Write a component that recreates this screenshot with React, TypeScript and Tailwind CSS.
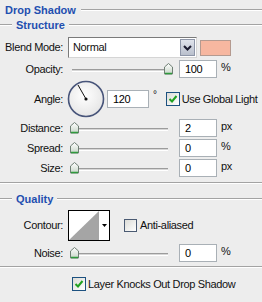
const Etched = ({ className = '' }: { className?: string }) => (
  <div className={`h-[2px] border-t border-[#a3a3a3] border-b border-b-white ${className}`} />
);

const Thumb = () => (
  <svg width="9" height="12" viewBox="0 0 9 12">
    <defs>
      <linearGradient id="tg" x1="0" y1="0" x2="0" y2="1">
        <stop offset="0" stopColor="#ffffff" />
        <stop offset="1" stopColor="#c9d6c9" />
      </linearGradient>
    </defs>
    <path d="M4.5 0.5 L8.5 4 L8.5 11 L0.5 11 L0.5 4 Z" fill="url(#tg)" stroke="#6f7f74" />
    <path d="M1 10.5 L8 10.5" stroke="#2f9a3c" strokeWidth="1.5" />
  </svg>
);

const Slider = ({ value }: { value: number }) => (
  <div className="relative ml-[5px] h-[18px] w-[104px]">
    <div className="absolute left-[3px] top-[9px] h-[3px] w-[96px] border-t border-[#9c9c9c] border-b border-b-white bg-[#d6d6d6]" />
    <div className="absolute top-[3px]" style={{ left: 1 + (value / 100) * 94 }}>
      <Thumb />
    </div>
  </div>
);

const Field = ({ value, className = '' }: { value: string; className?: string }) => (
  <div
    className={`flex h-[18px] items-center border border-[#a9b0b6] bg-white pl-[5px] text-[11px] text-black ${className}`}
  >
    {value}
  </div>
);

const Check = ({ on }: { on: boolean }) => (
  <div className="flex h-[14px] w-[14px] shrink-0 items-center justify-center border border-[#1c5180] bg-gradient-to-br from-[#dcdcd7] to-white">
    {on && (
      <svg width="10" height="10" viewBox="0 0 10 10">
        <path d="M1.5 5 L4 7.5 L8.5 2" fill="none" stroke="#21a121" strokeWidth="2" />
      </svg>
    )}
  </div>
);

const Label = ({ children }: { children: string }) => (
  <div className="w-[64px] shrink-0 pr-[1px] text-right">{children}</div>
);

const SliderRow = ({ label, value, pos, unit, className = '' }: { label: string; value: string; pos: number; unit: string; className?: string }) => (
  <div className={`flex h-[18px] items-center ${className}`}>
    <Label>{label}</Label>
    <Slider value={pos} />
    <Field value={value} className="ml-[6px] w-[38px]" />
    <span className="ml-[4px] -mt-[4px]">{unit}</span>
  </div>
);

const Heading = ({ children, lead = false, className = '' }: { children: string; lead?: boolean; className?: string }) => (
  <div className={`flex h-[14px] items-center ${className}`}>
    {lead ? <Etched className="w-[12px]" /> : <div className="w-[5px]" />}
    <span className={`font-bold tracking-normal text-[#1f4fb0] ${lead ? 'mx-[4px]' : 'mr-[5px]'}`}>{children}</span>
    <Etched className="flex-1" />
  </div>
);

export default function App() {
  return (
    <div className="h-[302px] w-[262px] overflow-hidden whitespace-nowrap bg-[#ededed] pt-[3px] font-['Liberation_Sans',Arial,sans-serif] text-[11px] leading-none tracking-[-0.35px] text-[#111]">
      <Heading>Drop Shadow</Heading>
      <Heading lead className="mt-[1px]">Structure</Heading>

      <div className="mt-[5px] flex h-[21px] items-center">
        <Label>Blend Mode:</Label>
        <div className="ml-[4px] flex h-[21px] w-[129px] border border-[#7a7a7a] border-b-[#d5d5d5] border-r-[#d5d5d5] bg-white">
          <div className="flex flex-1 items-center pl-[4px]">Normal</div>
          <div className="m-[1px] flex w-[15px] items-center justify-center border border-[#8e96a8] bg-gradient-to-b from-[#e0e4ec] to-[#b9bfcc]">
            <svg width="9" height="6" viewBox="0 0 9 6">
              <path d="M1 1 L4.5 4.5 L8 1" fill="none" stroke="#1b1b30" strokeWidth="2" />
            </svg>
          </div>
        </div>
        <div className="ml-[3px] h-[16px] w-[31px] border border-[#b49a90] bg-[#f7b7a0]" />
      </div>

      <SliderRow label="Opacity:" value="100" pos={100} unit="%" className="mt-[2px]" />

      <div className="mt-[3px] flex h-[36px] items-center">
        <Label>Angle:</Label>
        <svg width="38" height="38" viewBox="0 0 38 38" className="ml-[3px] shrink-0">
          <defs>
            <radialGradient id="dial" cx="0.45" cy="0.4" r="0.6">
              <stop offset="0" stopColor="#ffffff" />
              <stop offset="1" stopColor="#e6e6e6" />
            </radialGradient>
          </defs>
          <circle cx="19" cy="19" r="17.5" fill="url(#dial)" stroke="#48557a" strokeWidth="1.6" />
          <line x1="19" y1="19" x2="11" y2="5" stroke="#111" strokeWidth="1" />
          <circle cx="19" cy="19" r="1.6" fill="#111" />
        </svg>
        <Field value="120" className="ml-[2px] w-[42px] shrink-0" />
        <span className="ml-[4px] -mt-[8px] text-[10px]">°</span>
        <div className="ml-[9px]">
          <Check on />
        </div>
        <span className="ml-[2px]">Use Global Light</span>
      </div>

      <SliderRow label="Distance:" value="2" pos={0} unit="px" className="mt-[2px]" />
      <SliderRow label="Spread:" value="0" pos={0} unit="%" className="mt-[2px]" />
      <SliderRow label="Size:" value="0" pos={0} unit="px" className="mt-[2px]" />

      <Etched className="mt-[5px]" />

      <Heading lead className="mt-[8px]">Quality</Heading>

      <div className="mt-[4px] flex h-[31px] items-center">
        <Label>Contour:</Label>
        <div className="ml-[4px] flex h-[31px] w-[42px] border border-black bg-white">
          <svg width="30" height="29" viewBox="0 0 30 29" className="shrink-0">
            <path d="M0 29 L30 0 L30 29 Z" fill="#a5a5a5" />
          </svg>
          <div className="flex flex-1 items-center justify-center">
            <svg width="5" height="3" viewBox="0 0 5 3">
              <path d="M0 0 L5 0 L2.5 3 Z" fill="#000" />
            </svg>
          </div>
        </div>
        <div className="ml-[14px] -mt-[1px] flex h-[13px] w-[13px] border border-[#4a5a72] bg-gradient-to-br from-[#dcdcd7] to-white" />
        <span className="ml-[3px]">Anti-aliased</span>
      </div>

      <SliderRow label="Noise:" value="0" pos={0} unit="%" className="mt-[3px]" />

      <Etched className="mt-[4px]" />

      <div className="mt-[8px] flex h-[16px] items-center pl-[72px]">
        <Check on />
        <span className="ml-[2px]">Layer Knocks Out Drop Shadow</span>
      </div>
    </div>
  );
}
